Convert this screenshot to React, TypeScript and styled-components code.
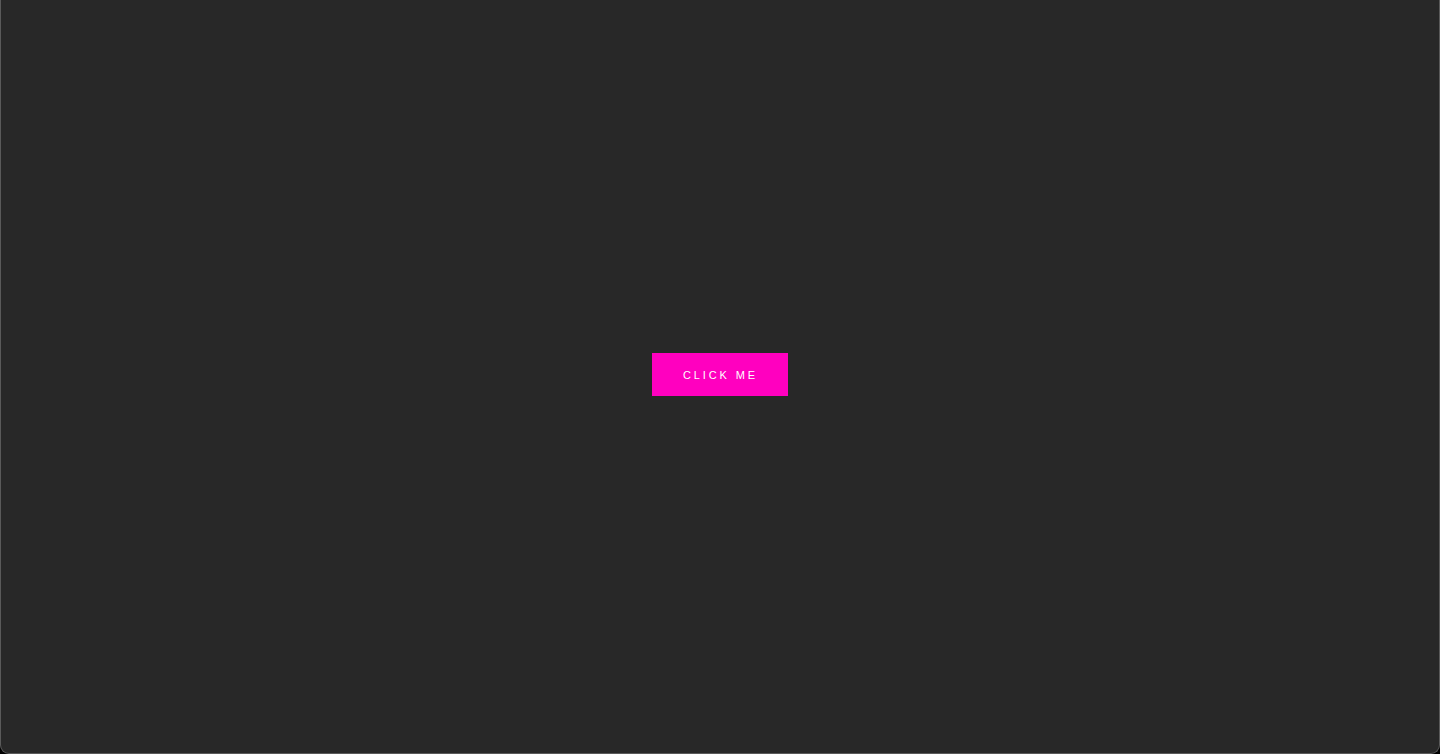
import React from "react";
import styled, { createGlobalStyle } from "styled-components";

const Global = createGlobalStyle`
  html, body { margin: 0; padding: 0; background: #000; }
  body { font-family: "Liberation Sans", Arial, sans-serif; }
`;

const Frame = styled.div`
  box-sizing: border-box;
  height: 754px;
  width: 1440px;
  background: #282828;
  border: 1px solid #5a5a5a;
  border-top: none;
  border-radius: 0 0 9px 9px;
  display: flex;
  align-items: center;
  justify-content: center;
  padding-bottom: 5px;
`;

const Button = styled.button`
  box-sizing: border-box;
  width: 136px;
  height: 43px;
  background: #ff00bf;
  color: #fff;
  border: none;
  border-radius: 0;
  font-family: "Liberation Sans", Arial, sans-serif;
  font-size: 11px;
  font-weight: 500;
  letter-spacing: 2.9px;
  text-transform: uppercase;
  padding: 2px 0 0 1px;
  cursor: pointer;
`;

export default function App() {
  return (
    <>
      <Global />
      <Frame>
        <Button>Click me</Button>
      </Frame>
    </>
  );
}
